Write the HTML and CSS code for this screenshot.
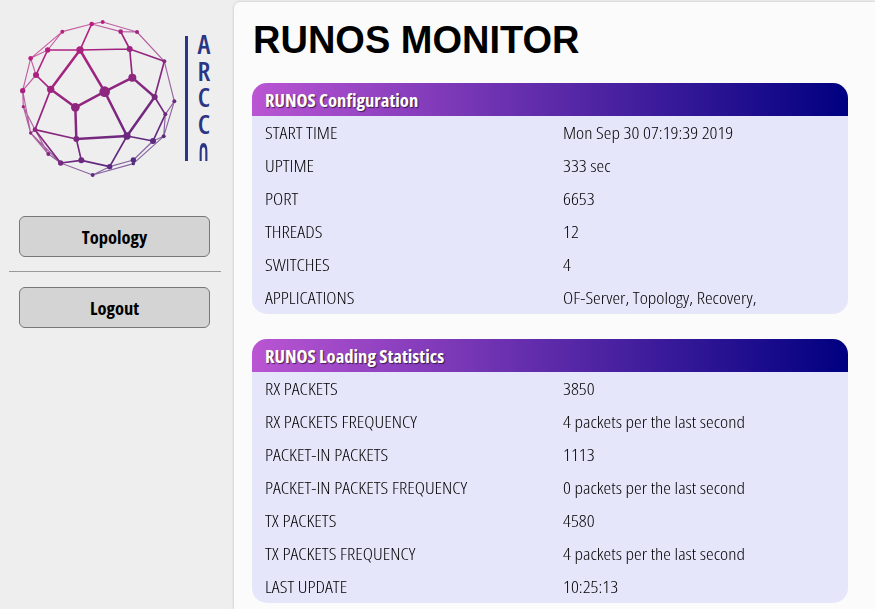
FILE: index.html
```html
<!DOCTYPE html>
<html lang="en">
<head>
<meta charset="utf-8">
<title>RUNOS Monitor</title>
<link rel="stylesheet" href="styles.css">
</head>
<body>
<div class="layout">
  <aside class="sidebar">
    <div class="logo">
    <svg class="logo-mesh" viewBox="0 0 534 570" width="178" height="190" aria-hidden="true">
      <defs>
        <linearGradient id="mesh" gradientUnits="userSpaceOnUse" x1="190" y1="110" x2="430" y2="500">
          <stop offset="0" stop-color="#b81f80"/>
          <stop offset="0.55" stop-color="#85287f"/>
          <stop offset="1" stop-color="#4f2a80"/>
        </linearGradient>
      </defs>
      <g class="mesh-thin">
        <path d="M275 72L308 66L411 96M275 72L362 95L411 96M275 72L187 95L92 175M187 95L143 150L92 175M411 96L493 184L523 304L491 409L400 491L278 525L182 489L92 399L68 272L92 175M92 175L108 225L68 272L70 320L92 399L105 389M523 304L496 343L491 409L459 423M70 320L105 389L145 462L182 489M92 399L145 462M278 525L329 500L400 480L459 423L491 409M278 525L400 491L400 480"/>
      </g>
      <g class="mesh-mid">
        <path d="M275 72L240 150M143 150L240 150L389 147M362 95L389 147L493 184M389 147L397 233M143 150L108 225L152 268M152 268L105 389M493 184L464 291L496 343L459 423M381 408L459 423M105 389L229 417M229 417L244 481L182 489M244 481L329 500L381 408M105 389L182 489"/>
      </g>
      <g class="mesh-bold">
        <path d="M240 150L152 268L226 322L314 275L240 150M314 275L397 233L464 291L381 408L314 275M226 322L229 417L381 408"/>
      </g>
      <g class="mesh-nodes">
        <circle cx="275" cy="72" r="7"/><circle cx="308" cy="66" r="6"/><circle cx="362" cy="95" r="7"/><circle cx="411" cy="96" r="6"/>
        <circle cx="187" cy="95" r="6"/><circle cx="143" cy="150" r="8"/><circle cx="240" cy="150" r="11"/><circle cx="389" cy="147" r="9"/>
        <circle cx="493" cy="184" r="6"/><circle cx="92" cy="175" r="7"/><circle cx="108" cy="225" r="9"/><circle cx="152" cy="268" r="11"/>
        <circle cx="68" cy="272" r="8"/><circle cx="397" cy="233" r="12"/><circle cx="314" cy="275" r="16"/><circle cx="226" cy="322" r="13"/>
        <circle cx="464" cy="291" r="9"/><circle cx="523" cy="304" r="6"/><circle cx="496" cy="343" r="6"/><circle cx="70" cy="320" r="5"/>
        <circle cx="105" cy="389" r="7"/><circle cx="92" cy="399" r="5"/><circle cx="229" cy="417" r="9"/><circle cx="381" cy="408" r="11"/>
        <circle cx="459" cy="423" r="9"/><circle cx="491" cy="409" r="6"/><circle cx="145" cy="462" r="6"/><circle cx="182" cy="489" r="8"/>
        <circle cx="244" cy="481" r="9"/><circle cx="329" cy="500" r="8"/><circle cx="400" cy="480" r="8"/><circle cx="400" cy="491" r="5"/>
        <circle cx="278" cy="525" r="6"/>
      </g>
    </svg>
    <div class="logo-bar"></div>
    <div class="logo-word">
      <span>A</span><span>R</span><span>C</span><span>C</span><span class="logo-last">∩</span>
    </div>
    </div>
    <nav class="menu">
      <a class="menu-btn" href="#">Topology</a>
      <hr class="menu-sep">
      <a class="menu-btn" href="#">Logout</a>
    </nav>
  </aside>
  <main class="content">
    <h1 class="title">RUNOS MONITOR</h1>
    <section class="card">
      <h2 class="card-head">RUNOS Configuration</h2>
      <div class="row"><span class="cell">START TIME</span><span class="cell">Mon Sep 30 07:19:39 2019</span></div>
      <div class="row"><span class="cell">UPTIME</span><span class="cell">333 sec</span></div>
      <div class="row"><span class="cell">PORT</span><span class="cell">6653</span></div>
      <div class="row"><span class="cell">THREADS</span><span class="cell">12</span></div>
      <div class="row"><span class="cell">SWITCHES</span><span class="cell">4</span></div>
      <div class="row"><span class="cell">APPLICATIONS</span><span class="cell">OF-Server, Topology, Recovery,</span></div>
    </section>
    <section class="card">
      <h2 class="card-head">RUNOS Loading Statistics</h2>
      <div class="row"><span class="cell">RX PACKETS</span><span class="cell">3850</span></div>
      <div class="row"><span class="cell">RX PACKETS FREQUENCY</span><span class="cell">4 packets per the last second</span></div>
      <div class="row"><span class="cell">PACKET-IN PACKETS</span><span class="cell">1113</span></div>
      <div class="row"><span class="cell">PACKET-IN PACKETS FREQUENCY</span><span class="cell">0 packets per the last second</span></div>
      <div class="row"><span class="cell">TX PACKETS</span><span class="cell">4580</span></div>
      <div class="row"><span class="cell">TX PACKETS FREQUENCY</span><span class="cell">4 packets per the last second</span></div>
      <div class="row"><span class="cell">LAST UPDATE</span><span class="cell">10:25:13</span></div>
    </section>
  </main>
</div>
</body>
</html>
```
FILE: styles.css
```css
html, body {
  margin: 0;
  height: 100%;
  overflow: hidden;
}
body {
  background: #eeeeee;
  color: #000;
  font-family: "Open Sans", "Liberation Sans", sans-serif;
  font-stretch: 75%;
  font-weight: 300;
  font-size: 17px;
}
.layout {
  display: flex;
  height: 100vh;
}
.sidebar {
  width: 234px;
  flex: none;
  box-sizing: border-box;
}
.logo {
  display: flex;
  align-items: flex-start;
  height: 190px;
  margin-bottom: 26px;
}
.logo-mesh {
  display: block;
  flex: none;
  filter: blur(0.3px);
}
.mesh-thin path, .mesh-mid path, .mesh-bold path {
  fill: none;
  stroke: url(#mesh);
  stroke-linejoin: round;
}
.mesh-thin path { stroke-width: 3.5; stroke-opacity: .7; }
.mesh-mid path { stroke-width: 5; }
.mesh-bold path { stroke-width: 7.5; }
.mesh-nodes { fill: url(#mesh); }
.logo-bar {
  flex: none;
  width: 3px;
  height: 125px;
  margin: 36px 0 0 7px;
  background: #2b3585;
}
.logo-word {
  display: flex;
  flex-direction: column;
  align-items: center;
  width: 14px;
  margin: 31px 0 0 9px;
  color: #2b3585;
  font-weight: 600;
  font-size: 26.6px;
  line-height: 26.5px;
}
.logo-last {
  font-family: "DejaVu Sans", sans-serif;
  font-stretch: normal;
  font-weight: 700;
  font-size: 31px;
  line-height: 26.5px;
  transform: scaleX(.5);
}
.menu {
  display: flex;
  flex-direction: column;
  padding: 0 13px 0 9px;
}
.menu-btn {
  display: block;
  margin: 0 11px 0 10px;
  height: 39px;
  line-height: 40px;
  text-align: center;
  background: #d4d4d4;
  border: 1px solid #777;
  border-radius: 6px;
  color: #000;
  font-weight: 700;
  font-size: 18.5px;
  text-decoration: none;
}
.menu-sep {
  width: 100%;
  height: 1px;
  margin: 14px 0 15px;
  border: 0;
  background: #999;
}
.content {
  flex: 1;
  margin-top: 2px;
  padding: 0 27px 0 18px;
  background: #fbfbfb;
  border-top-left-radius: 6px;
  box-shadow: 0 0 3px rgba(0, 0, 0, .2);
}
.title {
  margin: 0;
  padding: 20px 0 25px 1px;
  height: 36px;
  line-height: 36px;
  font-family: "Liberation Sans", Arial, sans-serif;
  font-stretch: normal;
  font-size: 38px;
  font-weight: 700;
}
.card {
  margin-bottom: 25px;
  background: #e6e6fa;
  border-radius: 15px;
  overflow: hidden;
}
.card-head {
  margin: 0;
  height: 33px;
  padding-left: 13px;
  line-height: 34px;
  font-size: 18.6px;
  font-weight: 700;
  color: #fff;
  text-shadow: 1px 1px 1px rgba(0, 0, 0, .6);
  background: linear-gradient(to right, #ba55d3, #000080);
}
.row {
  display: grid;
  grid-template-columns: 1fr 1fr;
  height: 33px;
  line-height: 34px;
}
.cell {
  justify-self: start;
  margin-left: 13px;
  white-space: nowrap;
  transform: scaleX(1.14);
  transform-origin: left center;
}
```
